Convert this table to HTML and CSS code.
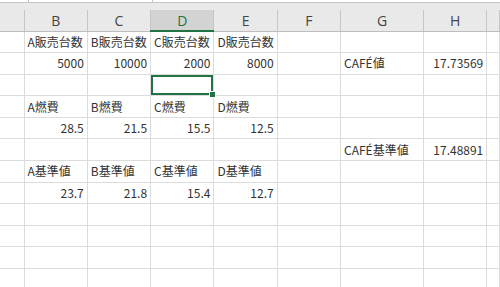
FILE: index.html
```html
<!DOCTYPE html>
<html lang="ja">
<head>
    <meta charset="UTF-8">
    <meta name="viewport" content="width=device-width, initial-scale=1.0">
    <title>CAFE</title>
    <link rel="stylesheet" href="styles.css">
</head>
<body>
    <div class="formula-bar">
        <div class="fx-name"></div>
        <div class="fx-mid"></div>
        <div class="fx-input"></div>
    </div>
    <div class="band"></div>

    <table class="sheet">
        <colgroup>
            <col class="c-row">
            <col class="c-std"><col class="c-std"><col class="c-std"><col class="c-std"><col class="c-std">
            <col class="c-wide">
            <col class="c-std">
            <col class="c-rest">
        </colgroup>
        <thead>
            <tr>
                <th></th><th>B</th><th>C</th><th class="sel">D</th><th>E</th><th>F</th><th>G</th><th>H</th><th></th>
            </tr>
        </thead>
        <tbody>
            <tr>
                <td></td><td>A販売台数</td><td>B販売台数</td><td>C販売台数</td><td>D販売台数</td><td></td><td></td><td></td><td></td>
            </tr>
            <tr>
                <td></td><td class="num">5000</td><td class="num">10000</td><td class="num">2000</td><td class="num">8000</td><td></td><td>CAFÉ値</td><td class="num">17.73569</td><td></td>
            </tr>
            <tr>
                <td></td><td></td><td></td><td class="active"></td><td></td><td></td><td></td><td></td><td></td>
            </tr>
            <tr>
                <td></td><td>A燃費</td><td>B燃費</td><td>C燃費</td><td>D燃費</td><td></td><td></td><td></td><td></td>
            </tr>
            <tr>
                <td></td><td class="num">28.5</td><td class="num">21.5</td><td class="num">15.5</td><td class="num">12.5</td><td></td><td></td><td></td><td></td>
            </tr>
            <tr>
                <td></td><td></td><td></td><td></td><td></td><td></td><td>CAFÉ基準値</td><td class="num">17.48891</td><td></td>
            </tr>
            <tr>
                <td></td><td>A基準値</td><td>B基準値</td><td>C基準値</td><td>D基準値</td><td></td><td></td><td></td><td></td>
            </tr>
            <tr>
                <td></td><td class="num">23.7</td><td class="num">21.8</td><td class="num">15.4</td><td class="num">12.7</td><td></td><td></td><td></td><td></td>
            </tr>
            <tr><td></td><td></td><td></td><td></td><td></td><td></td><td></td><td></td><td></td></tr>
            <tr><td></td><td></td><td></td><td></td><td></td><td></td><td></td><td></td><td></td></tr>
            <tr><td></td><td></td><td></td><td></td><td></td><td></td><td></td><td></td><td></td></tr>
            <tr><td></td><td></td><td></td><td></td><td></td><td></td><td></td><td></td><td></td></tr>
        </tbody>
    </table>
</body>
</html>
```

FILE: styles.css
```css
:root {
    --green: #217346;
    --grid: #dcdcdc;
    --head-bg: #e9e9e9;
    --head-line: #c6c6c6;
    --text: #333333;
}

* {
    margin: 0;
    padding: 0;
    box-sizing: border-box;
}

body {
    width: 500px;
    height: 287px;
    overflow: hidden;
    background: #ffffff;
    font-family: "Noto Sans CJK JP", sans-serif;
    color: var(--text);
}

/* formula bar edge along the top */
.formula-bar {
    display: flex;
    height: 3px;
    background: #ffffff;
    border-bottom: 1px solid var(--head-line);
}

.fx-name {
    width: 29px;
    border-right: 1px solid var(--head-line);
}

.fx-mid {
    width: 124px;
    border-right: 1px solid var(--head-line);
}

.fx-input {
    flex: 1;
}

.band {
    height: 7px;
    background: var(--head-bg);
}

.sheet {
    width: 500px;
    table-layout: fixed;
    border-collapse: collapse;
    font-size: 12px;
}

.c-row { width: 24px; }
.c-std { width: 63.3px; }
.c-wide { width: 83px; }
.c-rest { width: 13px; }

/* column letters */
.sheet th {
    height: 21px;
    background: var(--head-bg);
    border-right: 1px solid var(--head-line);
    border-bottom: 1px solid #bdbdbd;
    font-family: "Open Sans", "Noto Sans", sans-serif;
    font-weight: 400;
    font-size: 14px;
    color: #444444;
    text-align: center;
    vertical-align: middle;
}

.sheet th.sel {
    background: #d3d3d3;
    color: var(--green);
    border-bottom: 2px solid var(--green);
}

.sheet td {
    height: 21.6px;
    padding: 0 3px;
    border-right: 1px solid var(--grid);
    border-bottom: 1px solid var(--grid);
    white-space: nowrap;
    overflow: visible;
    vertical-align: middle;
    line-height: 1;
}

.sheet td.num {
    text-align: right;
}

/* selected cell with its fill handle */
.sheet td.active {
    position: relative;
    box-shadow: inset 0 0 0 2px var(--green);
}

.sheet td.active::after {
    content: "";
    position: absolute;
    right: -3px;
    bottom: -3px;
    width: 5px;
    height: 5px;
    background: var(--green);
    border: 1px solid #ffffff;
}
```
